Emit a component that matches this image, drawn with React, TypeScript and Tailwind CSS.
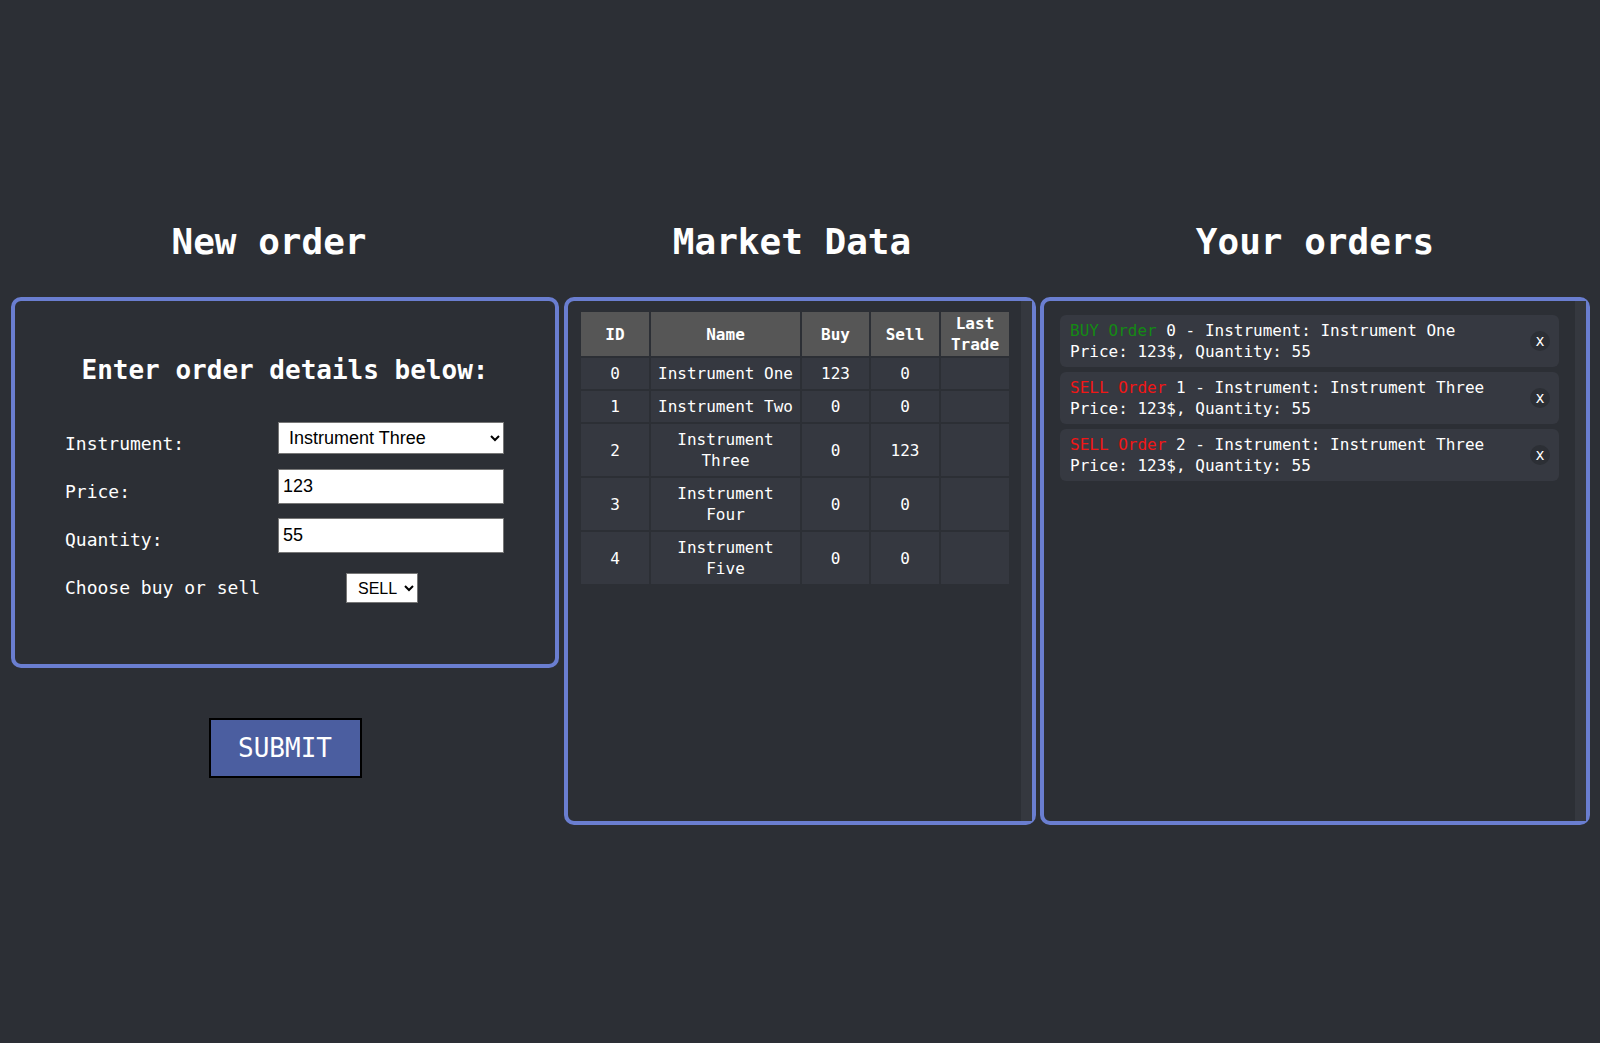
import { useState } from 'react';

const instruments = [
  { id: 0, name: 'Instrument One', buy: 123, sell: 0 },
  { id: 1, name: 'Instrument Two', buy: 0, sell: 0 },
  { id: 2, name: 'Instrument Three', buy: 0, sell: 123 },
  { id: 3, name: 'Instrument Four', buy: 0, sell: 0 },
  { id: 4, name: 'Instrument Five', buy: 0, sell: 0 },
];

const initialOrders = [
  { id: 0, side: 'BUY', instrument: 'Instrument One', price: 123, quantity: 55 },
  { id: 1, side: 'SELL', instrument: 'Instrument Three', price: 123, quantity: 55 },
  { id: 2, side: 'SELL', instrument: 'Instrument Three', price: 123, quantity: 55 },
];

export default function App() {
  const [instrument, setInstrument] = useState('Instrument Three');
  const [price, setPrice] = useState('123');
  const [quantity, setQuantity] = useState('55');
  const [side, setSide] = useState('SELL');
  const [orders, setOrders] = useState(initialOrders);

  return (
    <div className="min-h-screen bg-[#2c2f35] text-white font-['DejaVu_Sans_Mono','Liberation_Mono',monospace]">
      <div className="flex pt-[220px] pl-[11px]">
        {/* New order */}
        <div className="w-[548px] flex flex-col">
          <h1 className="h-[44px] leading-[44px] text-[36px] font-bold text-center pr-[32px]">New order</h1>
          <div className="mt-[33px] h-[371px] border-[4px] border-[#6a7ed0] rounded-[10px] pl-[50px]">
            <h2 className="mt-[53px] h-[32px] leading-[32px] text-[26px] font-bold text-center pr-[50px]">
              Enter order details below:
            </h2>
            <div className="mt-[36px] flex flex-col text-[18px] leading-[22px]">
              <div className="flex items-center h-[32px]">
                <label className="w-[213px] pt-[12px]">Instrument:</label>
                <select
                  value={instrument}
                  onChange={e => setInstrument(e.target.value)}
                  className="w-[226px] h-[32px] bg-white text-black border border-[#767676] pl-[6px] pr-[4px] text-[18px] font-['Liberation_Sans',Arial,sans-serif]"
                >
                  {instruments.map(i => (
                    <option key={i.id}>{i.name}</option>
                  ))}
                </select>
              </div>
              <div className="flex items-center h-[35px] mt-[15px]">
                <label className="w-[213px] pt-[11px]">Price:</label>
                <input
                  value={price}
                  onChange={e => setPrice(e.target.value)}
                  className="w-[226px] h-[35px] bg-white text-black border border-[#767676] px-[4px] text-[18px] font-['Liberation_Sans',Arial,sans-serif] outline-none"
                />
              </div>
              <div className="flex items-center h-[35px] mt-[14px]">
                <label className="w-[213px] pt-[9px]">Quantity:</label>
                <input
                  value={quantity}
                  onChange={e => setQuantity(e.target.value)}
                  className="w-[226px] h-[35px] bg-white text-black border border-[#767676] px-[4px] text-[18px] font-['Liberation_Sans',Arial,sans-serif] outline-none"
                />
              </div>
              <div className="flex items-center h-[30px] mt-[20px]">
                <label className="w-[281px]">Choose buy or sell</label>
                <select
                  value={side}
                  onChange={e => setSide(e.target.value)}
                  className="w-[72px] h-[30px] bg-white text-black border border-[#767676] pl-[7px] text-[16px] font-['Liberation_Sans',Arial,sans-serif]"
                >
                  <option>BUY</option>
                  <option>SELL</option>
                </select>
              </div>
            </div>
          </div>
          <button className="mt-[50px] mx-auto w-[153px] h-[60px] border-2 border-black bg-[#4b5ea0] text-[26px] text-white">
            SUBMIT
          </button>
        </div>

        {/* Market data */}
        <div className="w-[472px] ml-[5px] flex flex-col">
          <h1 className="h-[44px] leading-[44px] text-[36px] font-bold text-center pr-[16px]">Market Data</h1>
          <div className="mt-[33px] h-[528px] border-[4px] border-[#6a7ed0] rounded-[10px] flex">
            <div className="flex-1 pl-[11px] pt-[9px]">
              <table className="table-fixed border-separate border-spacing-[2px] w-[432px] text-[16px] leading-[21px] text-center">
                <thead>
                  <tr className="bg-[#565656] font-bold">
                    <th className="w-[68px] py-[1px]">ID</th>
                    <th className="w-[149px] py-[1px]">Name</th>
                    <th className="w-[67px] py-[1px]">Buy</th>
                    <th className="w-[68px] py-[1px]">Sell</th>
                    <th className="w-[68px] py-[1px]">Last Trade</th>
                  </tr>
                </thead>
                <tbody>
                  {instruments.map(i => (
                    <tr key={i.id}>
                      <td className="bg-[#353840] py-[5px]">{i.id}</td>
                      <td className="bg-[#353840] py-[5px] px-[6px]">{i.name}</td>
                      <td className="bg-[#353840] py-[5px]">{i.buy}</td>
                      <td className="bg-[#353840] py-[5px]">{i.sell}</td>
                      <td className="bg-[#353840] py-[5px]"></td>
                    </tr>
                  ))}
                </tbody>
              </table>
            </div>
            <div className="w-[11px] bg-[#35383f]" />
          </div>
        </div>

        {/* Your orders */}
        <div className="w-[550px] ml-[4px] flex flex-col">
          <h1 className="h-[44px] leading-[44px] text-[36px] font-bold text-center">Your orders</h1>
          <div className="mt-[33px] h-[528px] border-[4px] border-[#6a7ed0] rounded-[10px] flex">
            <div className="flex-1 pl-[16px] pr-[16px] pt-[14px] flex flex-col gap-[5px]">
              {orders.map(o => (
                <div key={o.id} className="flex items-center justify-between bg-[#363941] rounded-[6px] pl-[10px] pr-[9px] py-[5px] text-[16px] leading-[21px]">
                  <div>
                    <p>
                      <span className={o.side === 'BUY' ? 'text-[#148a14]' : 'text-[#f21616]'}>{o.side} Order</span>{' '}
                      {o.id} - Instrument: {o.instrument}
                    </p>
                    <p>Price: {o.price}$, Quantity: {o.quantity}</p>
                  </div>
                  <button
                    onClick={() => setOrders(orders.filter(x => x.id !== o.id))}
                    className="w-[20px] h-[20px] rounded-full bg-[#2c2f35] text-[15px] leading-[20px] text-white"
                  >
                    x
                  </button>
                </div>
              ))}
            </div>
            <div className="w-[11px] bg-[#35383f]" />
          </div>
        </div>
      </div>
    </div>
  );
}
